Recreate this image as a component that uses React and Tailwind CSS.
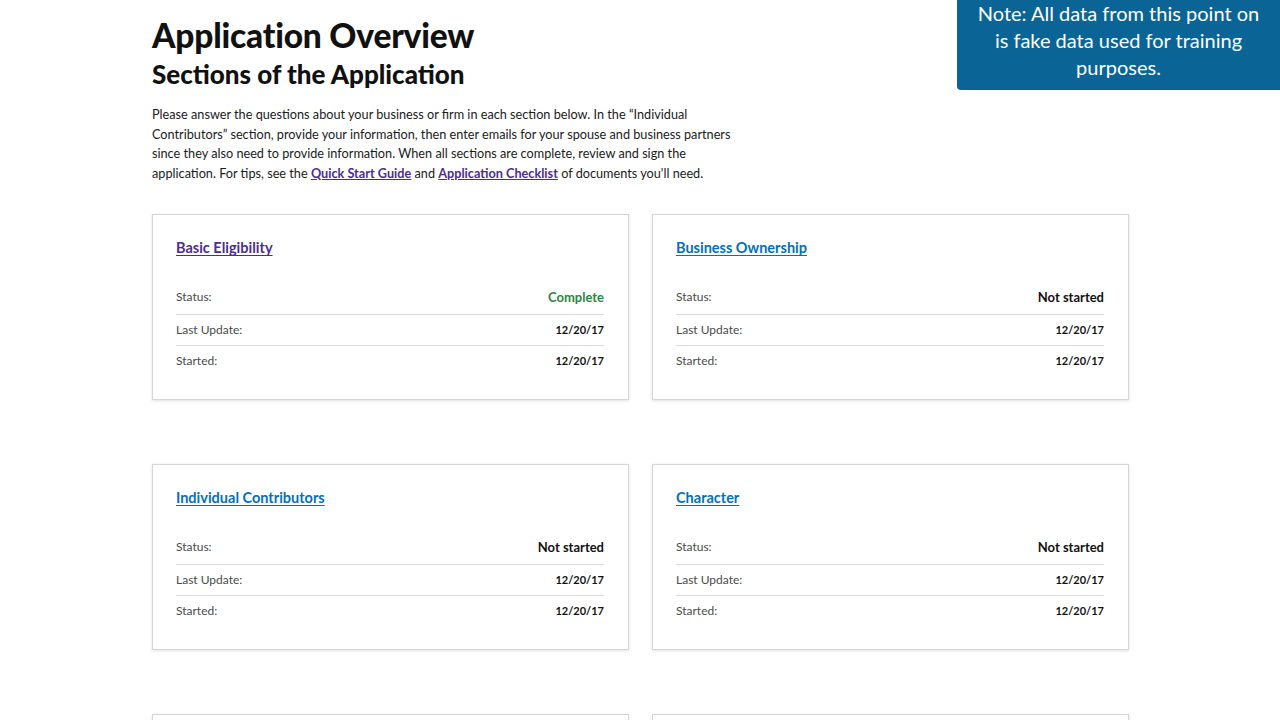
const sections = [
  { title: "Basic Eligibility", visited: true, status: "Complete", done: true },
  { title: "Business Ownership", status: "Not started" },
  { title: "Individual Contributors", status: "Not started" },
  { title: "Character", status: "Not started" },
  { title: "Potential for Success", status: "Not started" },
  { title: "Control", status: "Not started" },
];

function Row({ label, children, className }) {
  return (
    <div className={"flex items-center justify-between " + className}>
      <span className="text-[12px] text-[#4a4a4a]">{label}</span>
      {children}
    </div>
  );
}

function SectionCard({ s }) {
  return (
    <div className="h-[186px] border border-[#d6d6d6] bg-white shadow-[0_1px_3px_rgba(0,0,0,0.12)] pl-[23px] pr-6 pt-[21px]">
      <div className="leading-[22px]">
        <a
          href="#"
          className={
            "text-[14.5px] font-bold underline underline-offset-2 " +
            (s.visited ? "text-[#4c2c92]" : "text-[#0071bc]")
          }
        >
          {s.title}
        </a>
      </div>
      <div className="mt-[21px]">
        <Row label="Status:" className="h-[35px] border-b border-[#dcdcdc]">
          <span className={"text-[13px] font-bold " + (s.done ? "text-[#2e8540]" : "text-[#111]")}>
            {s.status}
          </span>
        </Row>
        <Row label="Last Update:" className="h-[31px] border-b border-[#dcdcdc]">
          <span className="text-[11px] font-bold text-[#111]">12/20/17</span>
        </Row>
        <Row label="Started:" className="h-[30px]">
          <span className="text-[11px] font-bold text-[#111]">12/20/17</span>
        </Row>
      </div>
    </div>
  );
}

export default function App() {
  return (
    <div className="relative min-h-[720px] bg-white font-['Lato','Liberation_Sans',sans-serif] text-[#111]">
      <div className="absolute right-0 top-0 w-[323px] h-[90px] bg-[#0a6496] rounded-bl-[4px] text-center text-white text-[20px] leading-[27px] px-3">
        Note: All data from this point on is fake data used for training purposes.
      </div>

      <div className="w-[977px] ml-[152px] pt-[15px]">
        <h1 className="text-[33.5px] font-black leading-[40px] tracking-[-0.2px]">Application Overview</h1>
        <h2 className="text-[26px] font-black leading-[30px] mt-[4px]">Sections of the Application</h2>
        <p className="mt-[16px] w-[590px] text-[12.7px] leading-[19.6px] text-[#1b1b1b]">
          Please answer the questions about your business or firm in each section below. In the “Individual
          Contributors” section, provide your information, then enter emails for your spouse and business partners
          since they also need to provide information. When all sections are complete, review and sign the
          application. For tips, see the{" "}
          <a href="#" className="font-bold text-[#4c2c92] underline">Quick Start Guide</a> and{" "}
          <a href="#" className="font-bold text-[#4c2c92] underline">Application Checklist</a> of documents you'll need.
        </p>

        <div className="mt-[31px] grid grid-cols-2 gap-x-[23px] gap-y-[64px]">
          {sections.map((s) => (
            <SectionCard key={s.title} s={s} />
          ))}
        </div>
      </div>
    </div>
  );
}
